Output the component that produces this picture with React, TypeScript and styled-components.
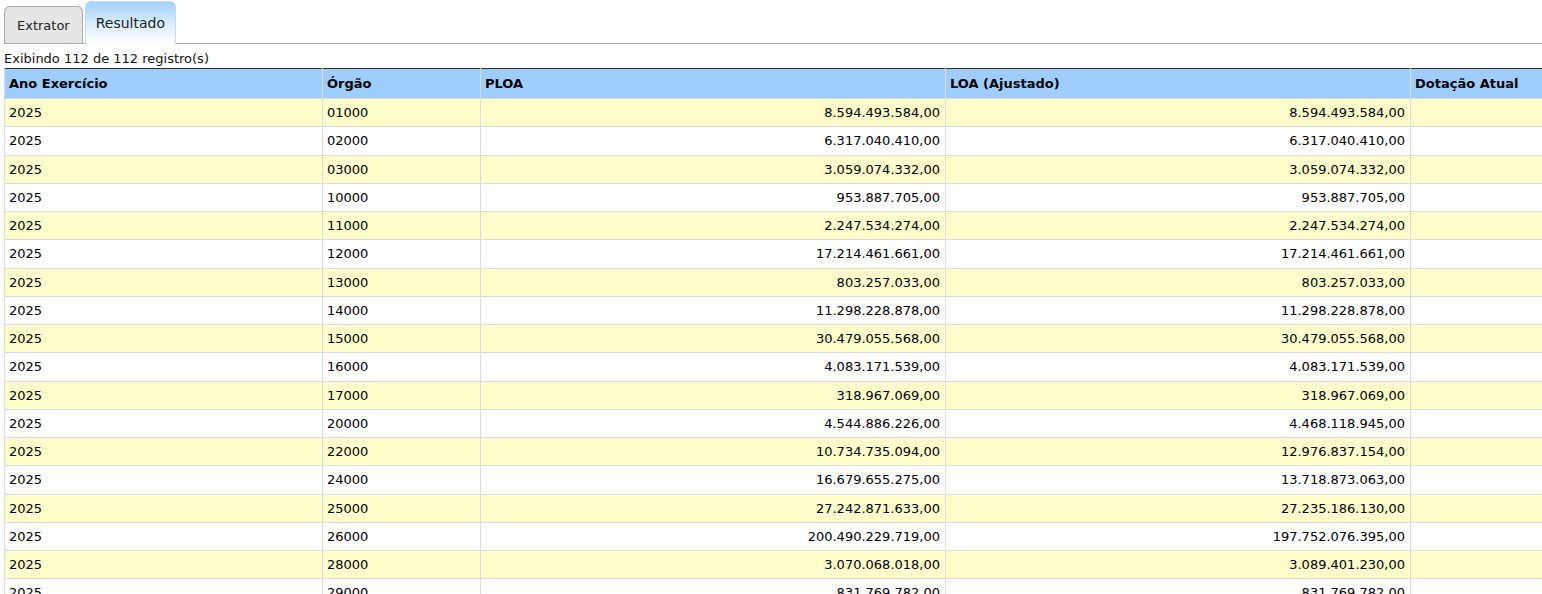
import styled, { createGlobalStyle } from 'styled-components';

const GlobalStyle = createGlobalStyle`
  html, body {
    margin: 0;
    padding: 0;
    background: #ffffff;
    overflow: hidden;
  }
  body {
    font-family: "DejaVu Sans", Verdana, sans-serif;
    font-size: 13px;
    color: #000;
  }
`;

const Page = styled.div`
  padding: 0 0 0 4px;
  width: 1538px;
  overflow: hidden;
`;

const TabBar = styled.div`
  display: flex;
  align-items: flex-end;
  gap: 2px;
  height: 43px;
  border-bottom: 1px solid #aaaaaa;
`;

const Tab = styled.div<{ $active?: boolean }>`
  box-sizing: border-box;
  display: flex;
  align-items: center;
  justify-content: center;
  padding: 0 ${(p) => (p.$active ? '10px' : '12px')};
  height: ${(p) => (p.$active ? '43px' : '37px')};
  margin-bottom: ${(p) => (p.$active ? '-1px' : '0')};
  padding-top: ${(p) => (p.$active ? '0' : '1px')};
  border: 1px solid ${(p) => (p.$active ? '#c5dbef' : '#aaaaaa')};
  border-bottom: ${(p) => (p.$active ? 'none' : '0')};
  border-radius: 6px 6px 0 0;
  background: ${(p) =>
    p.$active ? 'linear-gradient(to bottom, #a2d0ff 0%, #dcefff 55%, #ffffff 100%)' : '#e6e6e6'};
  color: #222;
  font-size: ${(p) => (p.$active ? '14px' : '13px')};
  cursor: pointer;
`;

const Info = styled.div`
  font-size: 13px;
  line-height: 15px;
  margin-top: 7px;
  height: 17px;
  color: #111;
`;

const Table = styled.table`
  border-collapse: collapse;
  table-layout: fixed;
  width: 1871px;
  border-top: 1px solid #333333;
`;

const Col = styled.col<{ $w: number }>`
  width: ${(p) => p.$w}px;
`;

const Th = styled.th`
  background: #9fcdfe;
  font-weight: bold;
  text-align: left;
  padding: 0 5px 0 4px;
  height: 29px;
  border-left: 1px solid #dcdcdc;
  border-bottom: 1px solid #dcdcdc;
  white-space: nowrap;
`;

const Tr = styled.tr<{ $odd: boolean }>`
  height: 28.25px;
  background: ${(p) => (p.$odd ? '#fefecd' : '#ffffff')};
`;

const Td = styled.td<{ $num?: boolean }>`
  padding: 0 5px 0 4px;
  text-align: ${(p) => (p.$num ? 'right' : 'left')};
  border-left: 1px solid #dcdcdc;
  border-bottom: 1px solid #dcdcdc;
  white-space: nowrap;
`;

const rows: [string, string, string][] = [
  ['01000', '8.594.493.584,00', '8.594.493.584,00'],
  ['02000', '6.317.040.410,00', '6.317.040.410,00'],
  ['03000', '3.059.074.332,00', '3.059.074.332,00'],
  ['10000', '953.887.705,00', '953.887.705,00'],
  ['11000', '2.247.534.274,00', '2.247.534.274,00'],
  ['12000', '17.214.461.661,00', '17.214.461.661,00'],
  ['13000', '803.257.033,00', '803.257.033,00'],
  ['14000', '11.298.228.878,00', '11.298.228.878,00'],
  ['15000', '30.479.055.568,00', '30.479.055.568,00'],
  ['16000', '4.083.171.539,00', '4.083.171.539,00'],
  ['17000', '318.967.069,00', '318.967.069,00'],
  ['20000', '4.544.886.226,00', '4.468.118.945,00'],
  ['22000', '10.734.735.094,00', '12.976.837.154,00'],
  ['24000', '16.679.655.275,00', '13.718.873.063,00'],
  ['25000', '27.242.871.633,00', '27.235.186.130,00'],
  ['26000', '200.490.229.719,00', '197.752.076.395,00'],
  ['28000', '3.070.068.018,00', '3.089.401.230,00'],
  ['29000', '831.769.782,00', '831.769.782,00'],
];

export default function App() {
  return (
    <>
      <GlobalStyle />
      <Page>
        <TabBar>
          <Tab>Extrator</Tab>
          <Tab $active>Resultado</Tab>
        </TabBar>
        <Info>Exibindo 112 de 112 registro(s)</Info>
        <Table>
          <colgroup>
            <Col $w={318} />
            <Col $w={158} />
            <Col $w={465} />
            <Col $w={465} />
            <Col $w={465} />
          </colgroup>
          <thead>
            <tr>
              <Th>Ano Exercício</Th>
              <Th>Órgão</Th>
              <Th>PLOA</Th>
              <Th>LOA (Ajustado)</Th>
              <Th>Dotação Atual</Th>
            </tr>
          </thead>
          <tbody>
            {rows.map(([orgao, ploa, loa], i) => (
              <Tr key={orgao} $odd={i % 2 === 0}>
                <Td>2025</Td>
                <Td>{orgao}</Td>
                <Td $num>{ploa}</Td>
                <Td $num>{loa}</Td>
                <Td $num />
              </Tr>
            ))}
          </tbody>
        </Table>
      </Page>
    </>
  );
}
